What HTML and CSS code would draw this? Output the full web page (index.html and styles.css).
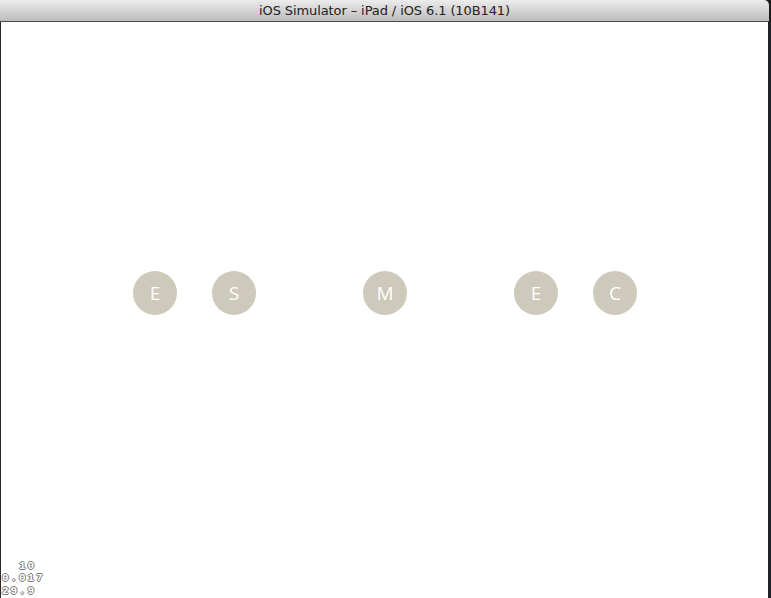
FILE: index.html
```html
<!DOCTYPE html>
<html>
<head>
<meta charset="utf-8">
<link rel="stylesheet" href="styles.css">
</head>
<body>
<div class="window">
  <div class="titlebar">iOS Simulator – iPad / iOS 6.1 (10B141)</div>
  <div class="screen">
    <div class="row">
      <div class="dot">E</div>
      <div class="dot">S</div>
      <div class="dot wide">M</div>
      <div class="dot wide">E</div>
      <div class="dot">C</div>
    </div>
    <pre class="stats">  10
0.017
29.9</pre>
  </div>
</div>
</body>
</html>
```
FILE: styles.css
```css
html, body {
  margin: 0;
  padding: 0;
  background: #1c1c1c;
}
.window {
  width: 771px;
  height: 598px;
  display: flex;
  flex-direction: column;
  overflow: hidden;
}
.titlebar {
  height: 21px;
  border-bottom: 1px solid #4a4a4a;
  border-radius: 0 5px 0 0;
  margin-right: 2px;
  background: linear-gradient(#ececec, #d4d4d4 50%, #bdbdbd);
  font-family: "DejaVu Sans", sans-serif;
  font-size: 13px;
  line-height: 22px;
  color: #222;
  text-align: center;
  letter-spacing: -0.1px;
}
.screen {
  flex: 1;
  background: #fff;
  border-left: 1px solid #2a2a2a;
  border-right: 3px solid #1e2226;
  display: flex;
  flex-direction: column;
  justify-content: space-between;
}
.row {
  display: flex;
  justify-content: center;
  gap: 35px;
  padding-top: 249px;
  padding-left: 1px;
}
.dot {
  width: 44px;
  height: 44px;
  border-radius: 50%;
  background: #cdc9bb;
  color: #fff;
  font-family: "Open Sans", sans-serif;
  font-weight: 400;
  font-size: 19px;
  display: flex;
  align-items: center;
  justify-content: center;
}
.dot.wide {
  margin-left: 72px;
}
.stats {
  margin: 0 0 1px 1px;
  font-family: "Liberation Mono", monospace;
  font-weight: bold;
  font-size: 11px;
  line-height: 12.5px;
  letter-spacing: 1.9px;
  color: #fff;
  text-shadow: 1px 0 0 #777, -1px 0 0 #777, 0 1px 0 #777, 0 -1px 0 #777;
}
```
